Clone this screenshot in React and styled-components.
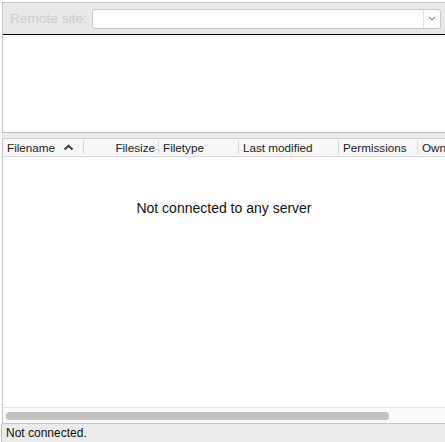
import styled, { createGlobalStyle } from 'styled-components'

const GlobalStyle = createGlobalStyle`
  html, body{
    margin: 0;
    padding: 0;
    background: #ffffff;
  }
  body{
    font-family: "Liberation Sans", Arial, sans-serif;
    color: #1a1a1a;
  }
`

const Frame = styled.div`
  display: flex;
  flex-direction: column;
  height: 442px;
  padding: 2px 0 0 2px;
  box-sizing: border-box;
  overflow: hidden;
`

const RemotePanel = styled.section`
  display: flex;
  flex-direction: column;
  height: 131px;
  flex-shrink: 0;
  border-top: 1px solid #c4c4c4;
  border-left: 1px solid #c4c4c4;
  border-bottom: 1px solid #c4c4c4;
  box-sizing: border-box;
`

const Toolbar = styled.div`
  display: flex;
  align-items: center;
  gap: 5px;
  height: 31px;
  padding: 0 4px 0 7px;
  background: #e8e8e8;
  border-bottom: 1px solid #000000;
  flex-shrink: 0;
`

const Label = styled.span`
  font-size: 13.7px;
  color: #cdcdcd;
  white-space: nowrap;
`

const Combo = styled.div`
  display: flex;
  flex: 1;
  height: 20px;
  background: #ffffff;
  border: 1px solid #c9c9c9;
  border-radius: 3px;
  box-sizing: border-box;
  .field{ flex: 1; }
  .arrow{
    display: flex;
    align-items: center;
    justify-content: center;
    width: 16px;
    border-left: 1px solid #e2e2e2;
    color: #9a9a9a;
  }
`

const Blank = styled.div`
  flex: 1;
  background: #ffffff;
`

const Splitter = styled.div`
  height: 5px;
  flex-shrink: 0;
  background: #ececec;
`

const ListPanel = styled.section`
  display: flex;
  flex-direction: column;
  flex: 1;
  border-left: 1px solid #c4c4c4;
  border-top: 1px solid #d0d0d0;
  min-height: 0;
`

const Header = styled.div`
  display: flex;
  height: 17px;
  flex-shrink: 0;
  background: #f7f7f7;
  border-bottom: 1px solid #dadada;
  font-size: 11.7px;
  color: #1c1c1c;
`

const Column = styled.div`
  display: flex;
  align-items: center;
  justify-content: ${p => (p.$right ? 'flex-end' : 'flex-start')};
  gap: 8px;
  width: ${p => p.$w}px;
  flex-shrink: 0;
  box-sizing: border-box;
  padding: ${p => (p.$right ? '0 4px 0 0' : '0 0 0 4px')};
  position: relative;
  white-space: nowrap;
  overflow: hidden;
  &::after{
    content: '';
    display: ${p => (p.$last ? 'none' : 'block')};
    position: absolute;
    right: 0;
    top: 2px;
    bottom: 2px;
    width: 1px;
    background: #d6d6d6;
  }
`

const Body = styled.div`
  flex: 1;
  display: flex;
  justify-content: center;
  padding-top: 43px;
  font-size: 14px;
  color: #111111;
`

const Track = styled.div`
  display: flex;
  align-items: center;
  height: 15px;
  flex-shrink: 0;
  padding: 0 3px;
  background: #fafafa;
  border-top: 1px solid #e6e6e6;
  border-bottom: 1px solid #c8c8c8;
`

const Thumb = styled.div`
  height: 8px;
  border-radius: 4px;
  background: #c1c1c1;
`

const Status = styled.footer`
  height: 18px;
  flex-shrink: 0;
  padding: 2px 0 0 4px;
  box-sizing: border-box;
  background: #ebebeb;
  border-left: 1px solid #c4c4c4;
  margin-left: -1px;
  font-size: 12px;
  color: #111111;
`

const columns = [
  { name: 'Filename', w: 81, sort: true },
  { name: 'Filesize', w: 75, right: true },
  { name: 'Filetype', w: 80 },
  { name: 'Last modified', w: 100 },
  { name: 'Permissions', w: 79 },
  { name: 'Owner/Group', w: 90, last: true },
]

function SortCaret() {
  return (
    <svg width="11" height="7" viewBox="0 0 11 7">
      <path d="M1.5 5.5 L5.5 1.8 L9.5 5.5" fill="none" stroke="#3a3a3a" strokeWidth="2" />
    </svg>
  )
}

function App() {
  return (
    <>
      <GlobalStyle />
      <Frame>
        <RemotePanel>
          <Toolbar>
            <Label>Remote site:</Label>
            <Combo>
              <div className="field" />
              <div className="arrow">
                <svg width="8" height="5" viewBox="0 0 8 5">
                  <path d="M1 1 L4 4 L7 1" fill="none" stroke="#9a9a9a" strokeWidth="1.2" />
                </svg>
              </div>
            </Combo>
          </Toolbar>
          <Blank />
        </RemotePanel>
        <Splitter />
        <ListPanel>
          <Header>
            {columns.map(col => (
              <Column key={col.name} $w={col.w} $right={col.right} $last={col.last}>
                {col.name}
                {col.sort && <SortCaret />}
              </Column>
            ))}
          </Header>
          <Body>Not connected to any server</Body>
          <Track>
            <Thumb style={{ width: '383px' }} />
          </Track>
        </ListPanel>
        <Status>Not connected.</Status>
      </Frame>
    </>
  )
}

export default App
